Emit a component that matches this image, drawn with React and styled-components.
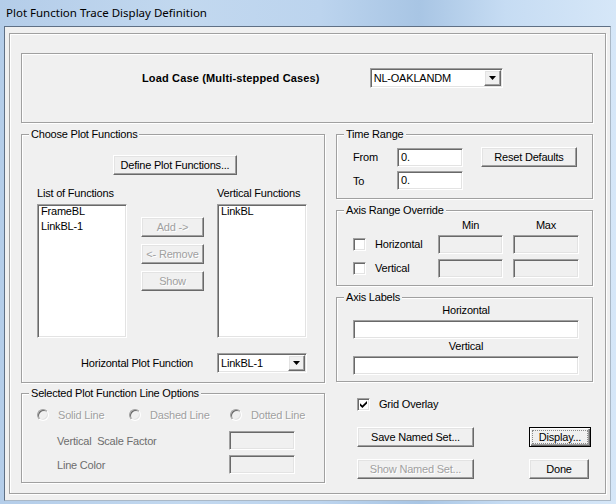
import React from 'react';
import styled, { createGlobalStyle, css } from 'styled-components';

const GlobalStyle = createGlobalStyle`
  html, body {
    margin: 0;
    padding: 0;
    background: #ffffff;
  }
`;

// classic 3D edges
const sunken = css`
  border: 1px solid;
  border-color: #a0a0a0 #ffffff #ffffff #a0a0a0;
  box-shadow: inset 1px 1px 0 #696969, inset -1px -1px 0 #e3e3e3;
`;

const raised = css`
  border: 1px solid;
  border-color: #ffffff #696969 #696969 #ffffff;
  box-shadow: inset -1px -1px 0 #a0a0a0, inset 1px 1px 0 #e3e3e3;
`;

const etched = css`
  border: 1px solid #a0a0a0;
  box-shadow: inset 1px 1px 0 #ffffff, 1px 1px 0 #ffffff;
`;

const Window = styled.div`
  width: 616px;
  height: 504px;
  box-sizing: border-box;
  padding: 0 5px 3px 4px;
  display: flex;
  flex-direction: column;
  background: linear-gradient(90deg, #b4cde9 0%, #c2d8ef 30%, #bcd4ee 52%, #a8c5e4 68%, #c6dcf3 82%, #d6e7f8 100%);
  font-family: "Liberation Sans", Arial, sans-serif;
  font-size: 11px;
  letter-spacing: -0.2px;
  color: #000;
`;

const TitleBar = styled.div`
  height: 26px;
  flex: none;
  box-sizing: border-box;
  display: flex;
  align-items: center;
  padding: 0 0 1px 2px;
  font-family: "Noto Sans", "Open Sans", sans-serif;
  font-size: 11.5px;
  letter-spacing: 0;
  color: #000;
`;

const Client = styled.div`
  flex: 1;
  display: flex;
  flex-direction: column;
  background: #f0f0f0;
  border: 1px solid;
  border-color: #5f7085 #aab8c6 #aab8c6 #5f7085;
`;

const Frame = styled.div`
  flex: 1;
  margin: 6px 4px 6px 4px;
  padding: 19px 12px 0 11px;
  display: flex;
  flex-direction: column;
  ${etched}
`;

const LoadCaseBox = styled.div`
  height: 70px;
  box-sizing: border-box;
  display: flex;
  align-items: flex-start;
  gap: 50px;
  padding: 14px 0 0 120px;
  ${etched}
`;

const BoldLabel = styled.span`
  font-weight: bold;
  line-height: 20px;
  letter-spacing: 0.15px;
`;

const Columns = styled.div`
  display: flex;
  gap: 11px;
  margin-top: 5px;
`;

const Column = styled.div`
  width: ${p => p.$w}px;
  display: flex;
  flex-direction: column;
  gap: ${p => p.$gap}px;
`;

const Group = styled.fieldset`
  margin: 0;
  padding: 0;
  min-width: 0;
  height: ${p => p.$h}px;
  box-sizing: border-box;
  ${etched}
`;

const Legend = styled.legend`
  margin-left: 7px;
  padding: 0 2px;
  line-height: 13px;
  background: #f0f0f0;
`;

const Button = styled.button`
  width: ${p => p.$w}px;
  height: 20px;
  box-sizing: border-box;
  margin: 0;
  padding: 0;
  display: flex;
  align-items: center;
  justify-content: center;
  background: #f0f0f0;
  font: inherit;
  letter-spacing: inherit;
  color: ${p => (p.disabled ? '#a0a0a0' : '#000')};
  text-shadow: ${p => (p.disabled ? '1px 1px 0 #fff' : 'none')};
  justify-self: ${p => p.$justify || 'auto'};
  ${raised}
  ${p => p.$default && css`
    border: 1px solid #000;
    box-shadow: inset 1px 1px 0 #ffffff, inset -1px -1px 0 #696969, inset -2px -2px 0 #a0a0a0;
    outline: 1px dotted #8a8a8a;
    outline-offset: -4px;
  `}
`;

const TextBox = styled.div`
  width: ${p => p.$w}px;
  height: ${p => p.$h || 19}px;
  box-sizing: border-box;
  padding: 0 3px;
  line-height: ${p => (p.$h || 19) - 2}px;
  background: ${p => (p.$disabled ? '#f0f0f0' : '#ffffff')};
  ${sunken}
`;

const ListBox = styled.div`
  width: ${p => p.$w}px;
  height: ${p => p.$h}px;
  box-sizing: border-box;
  padding: 0 3px;
  background: #ffffff;
  ${sunken}
`;

const ListItem = styled.div`
  line-height: 15px;
  margin-top: ${p => (p.$first ? '-1px' : '0')};
`;

const ComboField = styled.div`
  width: ${p => p.$w}px;
  height: 20px;
  box-sizing: border-box;
  padding: 1px 1px 1px 3px;
  display: flex;
  align-items: center;
  justify-content: space-between;
  background: #ffffff;
  ${sunken}
`;

const ComboButton = styled.div`
  width: 17px;
  height: 16px;
  box-sizing: border-box;
  display: flex;
  align-items: center;
  justify-content: center;
  background: #f0f0f0;
  ${raised}
`;

const Combo = ({ width, value }) => (
  <ComboField $w={width}>
    <span>{value}</span>
    <ComboButton>
      <svg width="7" height="4" viewBox="0 0 7 4">
        <polygon points="0,0 7,0 3.5,4" fill="#000" />
      </svg>
    </ComboButton>
  </ComboField>
);

const CheckBoxBox = styled.div`
  width: 13px;
  height: 13px;
  box-sizing: border-box;
  flex: none;
  display: flex;
  align-items: center;
  justify-content: center;
  background: #ffffff;
  margin-top: ${p => p.$top || 0}px;
  ${sunken}
`;

const CheckBox = ({ checked, top }) => (
  <CheckBoxBox $top={top}>
    {checked && (
      <svg width="7" height="7" viewBox="0 0 7 7">
        <path d="M0 2.3 L2.4 4.6 L7 0 L7 2.4 L2.4 7 L0 4.7 Z" fill="#000" />
      </svg>
    )}
  </CheckBoxBox>
);

const RadioCircle = styled.div`
  width: 12px;
  height: 12px;
  box-sizing: border-box;
  flex: none;
  border-radius: 50%;
  background: #f0f0f0;
  ${sunken}
`;

const RadioItem = styled.div`
  display: flex;
  align-items: center;
  gap: 9px;
  height: 13px;
  color: #a0a0a0;
  text-shadow: 1px 1px 0 #fff;
`;

// Choose Plot Functions
const ChooseBody = styled.div`
  padding: 14px 0 0 15px;
  display: flex;
  flex-direction: column;
  align-items: flex-start;
`;

const DefineButtonWrap = styled.div`
  margin-left: 76px;
`;

const ListGrid = styled.div`
  margin-top: 12px;
  display: grid;
  grid-template-columns: 104px 76px 90px;
  row-gap: 4px;
`;

const ColLabel = styled.div`
  line-height: 13px;
  grid-column: ${p => p.$col};
`;

const ButtonStack = styled.div`
  padding-top: 13px;
  display: flex;
  flex-direction: column;
  gap: 7px;
`;

const HorizontalRow = styled.div`
  width: 270px;
  margin-top: 15px;
  display: flex;
  justify-content: flex-end;
  align-items: center;
  gap: 24px;
`;

// Selected line options
const OptionsBody = styled.div`
  padding: 8px 0 0 15px;
`;

const RadioRow = styled.div`
  display: grid;
  grid-template-columns: 92px 101px auto;
`;

const FieldGrid = styled.div`
  margin-top: 10px;
  padding-left: 20px;
  display: grid;
  grid-template-columns: 172px 66px;
  row-gap: 5px;
  align-items: center;
  color: #6d6d6d;
`;

// Time range
const TimeGrid = styled.div`
  padding: 6px 0 0 16px;
  display: grid;
  grid-template-columns: 44px 66px 18px 96px;
  row-gap: 4px;
  align-items: center;
`;

// Axis range override
const RangeGrid = styled.div`
  padding: 1px 0 0 16px;
  display: grid;
  grid-template-columns: 22px 63px 75px 66px;
  grid-template-rows: 14px 21px 19px;
  row-gap: 3px;
  align-items: start;
`;

const HeadCell = styled.div`
  grid-column: ${p => p.$col};
  width: ${p => p.$w}px;
  text-align: center;
  line-height: 14px;
`;

const RowLabel = styled.div`
  line-height: 19px;
`;

// Axis labels
const LabelsBody = styled.div`
  padding-left: 16px;
  display: flex;
  flex-direction: column;
`;

const CenterCaption = styled.div`
  width: 226px;
  text-align: center;
  line-height: 13px;
  margin-top: ${p => p.$top || 0}px;
`;

const Spaced = styled.div`
  margin-top: ${p => p.$top}px;
`;

// bottom right area
const BottomArea = styled.div`
  padding: 11px 2px 0 21px;
`;

const CheckRow = styled.div`
  display: flex;
  align-items: center;
  gap: 9px;
  line-height: 13px;
`;

const ActionGrid = styled.div`
  margin-top: 16px;
  display: grid;
  grid-template-columns: 1fr auto;
  row-gap: 12px;
`;

export default function App() {
  return (
    <>
      <GlobalStyle />
      <Window>
        <TitleBar>Plot Function Trace Display Definition</TitleBar>
        <Client>
          <Frame>
            <LoadCaseBox>
              <BoldLabel>Load Case (Multi-stepped Cases)</BoldLabel>
              <Combo width={133} value="NL-OAKLANDM" />
            </LoadCaseBox>

            <Columns>
              <Column $w={304} $gap={4}>
                <Group $h={255}>
                  <Legend>Choose Plot Functions</Legend>
                  <ChooseBody>
                    <DefineButtonWrap>
                      <Button $w={124}>Define Plot Functions...</Button>
                    </DefineButtonWrap>
                    <ListGrid>
                      <ColLabel $col={1}>List of Functions</ColLabel>
                      <ColLabel $col={3}>Vertical Functions</ColLabel>
                      <ListBox $w={90} $h={134}>
                        <ListItem $first>FrameBL</ListItem>
                        <ListItem>LinkBL-1</ListItem>
                      </ListBox>
                      <ButtonStack>
                        <Button $w={63} disabled>Add -&gt;</Button>
                        <Button $w={63} disabled>&lt;- Remove</Button>
                        <Button $w={63} disabled>Show</Button>
                      </ButtonStack>
                      <ListBox $w={90} $h={134}>
                        <ListItem $first>LinkBL</ListItem>
                      </ListBox>
                    </ListGrid>
                    <HorizontalRow>
                      <span>Horizontal Plot Function</span>
                      <Combo width={90} value="LinkBL-1" />
                    </HorizontalRow>
                  </ChooseBody>
                </Group>

                <Group $h={96}>
                  <Legend>Selected Plot Function Line Options</Legend>
                  <OptionsBody>
                    <RadioRow>
                      <RadioItem><RadioCircle />Solid Line</RadioItem>
                      <RadioItem><RadioCircle />Dashed Line</RadioItem>
                      <RadioItem><RadioCircle />Dotted Line</RadioItem>
                    </RadioRow>
                    <FieldGrid>
                      <span>Vertical&nbsp; Scale Factor</span>
                      <TextBox $w={66} $disabled />
                      <span>Line Color</span>
                      <TextBox $w={66} $disabled />
                    </FieldGrid>
                  </OptionsBody>
                </Group>
              </Column>

              <Column $w={257} $gap={5}>
                <Group $h={71}>
                  <Legend>Time Range</Legend>
                  <TimeGrid>
                    <span>From</span>
                    <TextBox $w={66}>0.</TextBox>
                    <span />
                    <Button $w={96}>Reset Defaults</Button>
                    <span>To</span>
                    <TextBox $w={66}>0.</TextBox>
                  </TimeGrid>
                </Group>

                <Group $h={82}>
                  <Legend>Axis Range Override</Legend>
                  <RangeGrid>
                    <HeadCell $col={3} $w={65}>Min</HeadCell>
                    <HeadCell $col={4} $w={66}>Max</HeadCell>
                    <CheckBox top={3} />
                    <RowLabel>Horizontal</RowLabel>
                    <TextBox $w={65} $disabled />
                    <TextBox $w={66} $disabled />
                    <CheckBox top={3} />
                    <RowLabel>Vertical</RowLabel>
                    <TextBox $w={65} $disabled />
                    <TextBox $w={66} $disabled />
                  </RangeGrid>
                </Group>

                <Group $h={91}>
                  <Legend>Axis Labels</Legend>
                  <LabelsBody>
                    <CenterCaption>Horizontal</CenterCaption>
                    <Spaced $top={3}><TextBox $w={226} /></Spaced>
                    <CenterCaption $top={1}>Vertical</CenterCaption>
                    <Spaced $top={3}><TextBox $w={226} /></Spaced>
                  </LabelsBody>
                </Group>

                <BottomArea>
                  <CheckRow>
                    <CheckBox checked />
                    <span>Grid Overlay</span>
                  </CheckRow>
                  <ActionGrid>
                    <Button $w={117}>Save Named Set...</Button>
                    <Button $w={62} $default>Display...</Button>
                    <Button $w={117} disabled>Show Named Set...</Button>
                    <Button $w={60} $justify="start">Done</Button>
                  </ActionGrid>
                </BottomArea>
              </Column>
            </Columns>
          </Frame>
        </Client>
      </Window>
    </>
  );
}
